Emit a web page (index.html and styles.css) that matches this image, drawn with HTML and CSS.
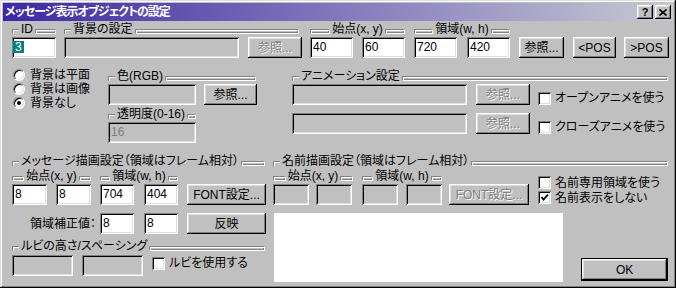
FILE: index.html
```html
<!DOCTYPE html>
<html lang="ja">
<head>
  <meta charset="UTF-8">
  <title>メッセージ表示オブジェクトの設定</title>
  <link rel="stylesheet" href="styles.css">
</head>
<body>
  <div class="window">
    <div class="titlebar">
      <span class="title">メッセージ表示オブジェクトの設定</span>
      <span class="tbtn">?</span>
      <span class="tbtn">
        <svg width="8" height="7" viewBox="0 0 8 7"><path d="M0.5 0.5 L7.5 6.5 M7.5 0.5 L0.5 6.5" stroke="#000" stroke-width="1.6"/></svg>
      </span>
    </div>

    <div class="content">
      <!-- top row -->
      <div class="row row-top">
        <div class="group g-id">
          <div class="legend"><i class="cap"></i><span>ID</span><i class="bar"></i></div>
          <div class="field w44"><span class="sel">3</span></div>
        </div>
        <div class="group g-bg">
          <div class="legend lg-bg"><i class="cap"></i><span>背景の設定</span><i class="bar"></i></div>
          <div class="controls">
            <div class="field off w175"></div>
            <div class="btn dis w54 ml9">参照...</div>
          </div>
        </div>
        <div class="group g-xy">
          <div class="legend"><i class="bar"></i><span>始点(x, y)</span><i class="bar"></i></div>
          <div class="controls">
            <div class="field w43">40</div>
            <div class="field w43 ml9">60</div>
          </div>
        </div>
        <div class="group g-wh">
          <div class="legend"><i class="bar"></i><span>領域(w, h)</span><i class="bar"></i></div>
          <div class="controls">
            <div class="field w43">720</div>
            <div class="field w43 ml10">420</div>
          </div>
        </div>
        <div class="btn w45 ml9">参照...</div>
        <div class="btn w43 ml9">&lt;POS</div>
        <div class="btn w45 ml8">&gt;POS</div>
      </div>

      <!-- background / animation -->
      <div class="row row-mid">
        <div class="radios">
          <div class="radio"><i class="dot"></i>背景は平面</div>
          <div class="radio"><i class="dot"></i>背景は画像</div>
          <div class="radio"><i class="dot on"></i>背景なし</div>
        </div>
        <div class="group g-color">
          <div class="legend lg-color"><i class="cap"></i><span>色(RGB)</span><i class="bar"></i></div>
          <div class="controls">
            <div class="field off w88"></div>
            <div class="btn w53 ml8">参照...</div>
          </div>
          <div class="legend lg-alpha"><i class="cap"></i><span>透明度(0-16)</span><i class="bar"></i></div>
          <div class="field off w88 grey">16</div>
        </div>
        <div class="group g-anim">
          <div class="legend"><i class="cap"></i><span>アニメーション設定</span><i class="bar"></i></div>
          <div class="controls">
            <div class="field off w175"></div>
            <div class="btn dis w54 ml9">参照...</div>
            <label class="check ml8"><i class="box"></i>オープンアニメを使う</label>
          </div>
          <div class="controls mt8">
            <div class="field off w175"></div>
            <div class="btn dis w54 ml9">参照...</div>
            <label class="check ml8"><i class="box"></i>クローズアニメを使う</label>
          </div>
        </div>
      </div>

      <!-- message / name drawing -->
      <div class="row row-bottom">
        <div class="col-msg">
          <div class="legend lg-msg"><i class="cap"></i><span>メッセージ描画設定（領域はフレーム相対）</span><i class="bar"></i></div>
          <div class="controls">
            <div class="group w79">
              <div class="legend"><i class="bar"></i><span>始点(x, y)</span><i class="bar"></i></div>
              <div class="controls">
                <div class="field w35">8</div>
                <div class="field w35 ml9">8</div>
              </div>
            </div>
            <div class="group w78 ml9">
              <div class="legend"><i class="bar"></i><span>領域(w, h)</span><i class="bar"></i></div>
              <div class="controls">
                <div class="field w34">704</div>
                <div class="field w34 ml10">404</div>
              </div>
            </div>
            <div class="btn w79 ml9">FONT設定...</div>
          </div>
          <div class="controls mt8">
            <div class="adjust">領域補正値：</div>
            <div class="field w34">8</div>
            <div class="field w34 ml10">8</div>
            <div class="btn w79 ml9">反映</div>
          </div>
          <div class="legend lg-ruby"><i class="cap"></i><span>ルビの高さ/スペーシング</span><i class="bar"></i></div>
          <div class="controls">
            <div class="field off w61"></div>
            <div class="field off w61 ml9"></div>
            <label class="check ml9 ruby"><i class="box"></i>ルビを使用する</label>
          </div>
        </div>

        <div class="col-name">
          <div class="legend"><i class="cap"></i><span>名前描画設定（領域はフレーム相対）</span><i class="bar"></i></div>
          <div class="controls">
            <div class="group w80">
              <div class="legend"><i class="bar"></i><span>始点(x, y)</span><i class="bar"></i></div>
              <div class="controls">
                <div class="field off w36"></div>
                <div class="field off w36 ml7"></div>
              </div>
            </div>
            <div class="group w80 ml9">
              <div class="legend"><i class="bar"></i><span>領域(w, h)</span><i class="bar"></i></div>
              <div class="controls">
                <div class="field off w36"></div>
                <div class="field off w36 ml8"></div>
              </div>
            </div>
            <div class="btn dis w80 ml7">FONT設定...</div>
            <div class="checks ml9">
              <label class="check"><i class="box"></i>名前専用領域を使う</label>
              <label class="check"><i class="box">
                <svg width="9" height="9" viewBox="0 0 9 9"><path d="M1.5 4 L3.5 6.5 L8 1.5" fill="none" stroke="#000" stroke-width="1.8"/></svg>
              </i>名前表示をしない</label>
            </div>
          </div>
          <div class="controls mt8">
            <div class="preview"></div>
            <div class="btn default">OK</div>
          </div>
        </div>
      </div>
    </div>
  </div>
</body>
</html>
```

FILE: styles.css
```css
body {
  margin: 0;
  background-color: #c0c0c0;
  font-family: "Liberation Sans", "Noto Sans CJK JP", sans-serif;
  font-size: 12px;
  line-height: 14px;
  font-feature-settings: "palt";
  color: #000;
}

.window {
  width: 676px;
  height: 288px;
  box-sizing: border-box;
  padding: 3px;
  background-color: #c0c0c0;
  box-shadow: inset -1px -1px #000, inset 1px 1px #dfdfdf, inset -2px -2px #808080, inset 2px 2px #fff;
}

/* Title bar */
.titlebar {
  display: flex;
  align-items: center;
  height: 18px;
  padding: 0 2px 0 2px;
  background: linear-gradient(to right, #3c28a4, #c8c8d4);
  color: #fff;
  font-weight: bold;
}

.title {
  flex: 1;
  white-space: nowrap;
  letter-spacing: -1px;
}

.tbtn {
  display: flex;
  align-items: center;
  justify-content: center;
  width: 16px;
  height: 14px;
  margin-left: 2px;
  box-sizing: border-box;
  background-color: #c0c0c0;
  color: #000;
  font-size: 11px;
  box-shadow: inset -1px -1px #000, inset 1px 1px #fff, inset -2px -2px #808080, inset 2px 2px #dfdfdf;
}

.content {
  padding: 1px 0 0 9px;
}

.row {
  display: flex;
  align-items: flex-start;
}

.row-top {
  align-items: flex-end;
}

.row-mid {
  margin-top: 11px;
}

.row-bottom {
  margin-top: 11px;
}

.group {
  display: flex;
  flex-direction: column;
}

.controls {
  display: flex;
  align-items: flex-end;
}

/* Group box headings */
.legend {
  display: flex;
  height: 14px;
  margin-bottom: 1px;
}

.legend span {
  padding: 0 2px;
  white-space: nowrap;
}

.cap,
.bar {
  align-self: flex-end;
  height: 5px;
  margin-bottom: 2px;
  box-sizing: border-box;
}

.cap {
  width: 7px;
  flex: none;
  border-top: 1px solid #808080;
  border-left: 1px solid #808080;
  box-shadow: inset 1px 1px #fff;
}

.bar {
  flex: 1;
  min-width: 4px;
  border: 1px solid;
  border-color: #808080 #fff #fff #808080;
  box-shadow: inset 1px 1px #fff, inset -1px -1px #808080;
}

/* Edit fields */
.field {
  height: 21px;
  box-sizing: border-box;
  padding: 3px 3px 0;
  background-color: #fff;
  white-space: nowrap;
  box-shadow: inset 1px 1px #808080, inset -1px -1px #fff, inset 2px 2px #000, inset -2px -2px #dfdfdf;
}

.field.off {
  background-color: #c0c0c0;
}

.field.grey {
  color: #808080;
}

.sel {
  display: inline-block;
  height: 12px;
  line-height: 12px;
  padding: 0 2px;
  margin: 1px 0 0 -2px;
  vertical-align: top;
  background-color: #008080;
  color: #fff;
}

/* Buttons */
.btn {
  display: flex;
  align-items: center;
  justify-content: center;
  height: 21px;
  box-sizing: border-box;
  white-space: nowrap;
  background-color: #c0c0c0;
  box-shadow: inset -1px -1px #000, inset 1px 1px #fff, inset -2px -2px #808080, inset 2px 2px #dfdfdf;
}

.btn.dis {
  color: #808080;
  text-shadow: 1px 1px #fff;
}

.btn.default {
  width: 87px;
  height: 23px;
  margin-left: 18px;
  margin-bottom: 1px;
  box-shadow: inset 0 0 0 1px #000, inset -2px -2px #000, inset 2px 2px #fff, inset -3px -3px #808080, inset 3px 3px #dfdfdf;
}

/* Radios and checkboxes */
.radios {
  width: 95px;
  margin-left: 1px;
  margin-top: -1px;
}

.radio {
  display: flex;
  align-items: center;
  height: 14px;
  white-space: nowrap;
}

.dot {
  position: relative;
  width: 12px;
  height: 12px;
  margin-right: 5px;
  box-sizing: border-box;
  border-radius: 50%;
  background-color: #fff;
  border: 1px solid;
  border-color: #808080 #fff #fff #808080;
  box-shadow: inset 1px 1px #000, inset -1px -1px #dfdfdf;
}

.dot.on::after {
  content: "";
  position: absolute;
  left: 3px;
  top: 3px;
  width: 4px;
  height: 4px;
  border-radius: 50%;
  background-color: #000;
}

.check {
  display: flex;
  align-items: center;
  height: 14px;
  white-space: nowrap;
}

.box {
  display: flex;
  align-items: center;
  justify-content: center;
  width: 13px;
  height: 13px;
  margin-right: 4px;
  box-sizing: border-box;
  background-color: #fff;
  box-shadow: inset 1px 1px #808080, inset -1px -1px #fff, inset 2px 2px #000, inset -2px -2px #dfdfdf;
}

.checks .check {
  height: 15px;
}

.check.ruby {
  align-self: flex-start;
  margin-top: 1px;
}

/* Layout pieces */
.g-id { width: 44px; }
.g-bg { width: 238px; margin-left: 8px; }
.lg-bg { margin-right: 3px; }
.g-xy { width: 95px; margin-left: 8px; }
.g-wh { width: 96px; margin-left: 9px; }

.g-color { width: 149px; }
.lg-color { margin-right: 1px; }
.lg-alpha { width: 88px; margin-top: 2px; }
.g-anim { width: 376px; margin-left: 35px; }

.col-msg { width: 254px; display: flex; flex-direction: column; }
.lg-msg { margin-right: 1px; }
.lg-ruby { margin-top: 5px; margin-right: 1px; margin-bottom: 2px; }
.col-name { width: 395px; margin-left: 7px; display: flex; flex-direction: column; }

.adjust {
  width: 88px;
  padding-right: 4px;
  box-sizing: border-box;
  text-align: right;
  align-self: center;
  white-space: nowrap;
}

.preview {
  width: 290px;
  height: 69px;
  margin-left: 1px;
  background-color: #fff;
}

.w34 { width: 34px; }
.w35 { width: 35px; }
.w36 { width: 36px; }
.w43 { width: 43px; }
.w44 { width: 44px; }
.w45 { width: 45px; }
.w53 { width: 53px; }
.w54 { width: 54px; }
.w61 { width: 61px; }
.w78 { width: 78px; }
.w79 { width: 79px; }
.w80 { width: 80px; }
.w88 { width: 88px; }
.w175 { width: 175px; }

.ml7 { margin-left: 7px; }
.ml8 { margin-left: 8px; }
.ml9 { margin-left: 9px; }
.ml10 { margin-left: 10px; }
.mt8 { margin-top: 8px; }
```
